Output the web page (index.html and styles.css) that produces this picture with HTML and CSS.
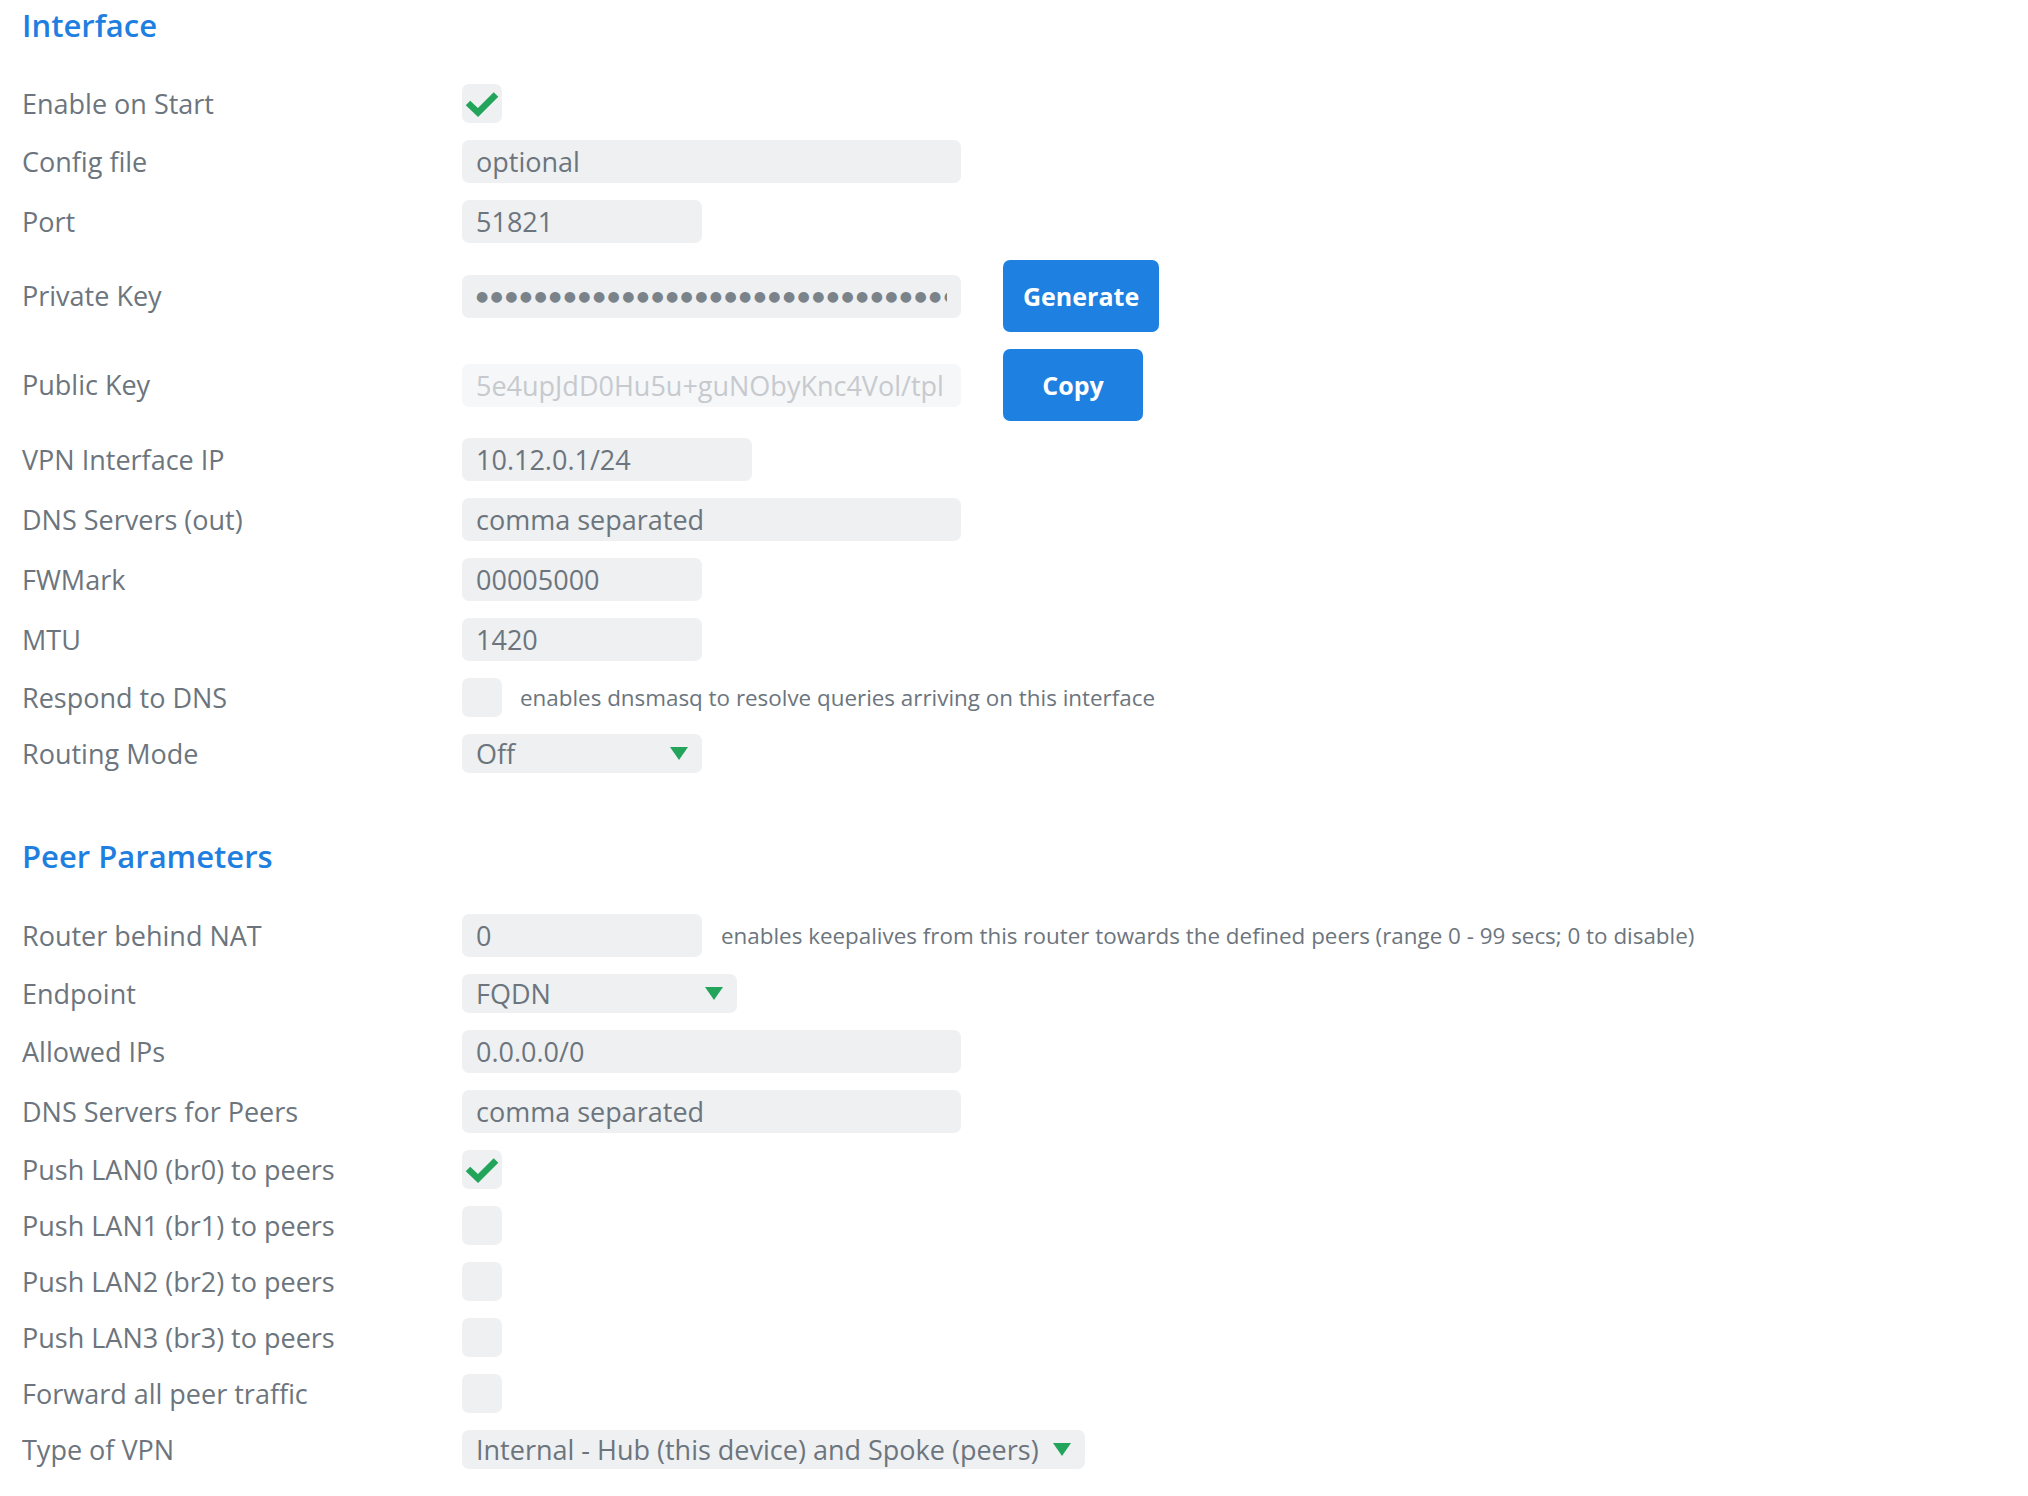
FILE: index.html
```html
<!DOCTYPE html>
<html lang="en">
<head>
<meta charset="utf-8">
<title>Interface</title>
<link rel="stylesheet" href="styles.css">
</head>
<body>
<main class="page">
  <section class="section">
    <h2 class="section-title">Interface</h2>
    <div class="form">
      <div class="row">
        <span class="label">Enable on Start</span>
        <div class="field">
          <span class="checkbox">
            <svg class="check" viewBox="0 0 40 39" width="40" height="39"><polyline points="6,19 16,28.5 34,10.5" /></svg>
          </span>
        </div>
      </div>
      <div class="row">
        <span class="label">Config file</span>
        <div class="field"><div class="input wide">optional</div></div>
      </div>
      <div class="row">
        <span class="label">Port</span>
        <div class="field"><div class="input short">51821</div></div>
      </div>
      <div class="row">
        <span class="label">Private Key</span>
        <div class="field">
          <div class="input wide"><span class="dots">&#9679;&#9679;&#9679;&#9679;&#9679;&#9679;&#9679;&#9679;&#9679;&#9679;&#9679;&#9679;&#9679;&#9679;&#9679;&#9679;&#9679;&#9679;&#9679;&#9679;&#9679;&#9679;&#9679;&#9679;&#9679;&#9679;&#9679;&#9679;&#9679;&#9679;&#9679;&#9679;&#9679;&#9679;&#9679;&#9679;&#9679;&#9679;</span></div>
          <button class="btn" type="button">Generate</button>
        </div>
      </div>
      <div class="row">
        <span class="label">Public Key</span>
        <div class="field">
          <div class="input wide disabled"><span class="clip">5e4upJdD0Hu5u+guNObyKnc4Vol/tpl</span></div>
          <button class="btn" type="button">Copy</button>
        </div>
      </div>
      <div class="row">
        <span class="label">VPN Interface IP</span>
        <div class="field"><div class="input mid">10.12.0.1/24</div></div>
      </div>
      <div class="row">
        <span class="label">DNS Servers (out)</span>
        <div class="field"><div class="input wide">comma separated</div></div>
      </div>
      <div class="row">
        <span class="label">FWMark</span>
        <div class="field"><div class="input short">00005000</div></div>
      </div>
      <div class="row">
        <span class="label">MTU</span>
        <div class="field"><div class="input short">1420</div></div>
      </div>
      <div class="row">
        <span class="label">Respond to DNS</span>
        <div class="field">
          <span class="checkbox"></span>
          <span class="hint">enables dnsmasq to resolve queries arriving on this interface</span>
        </div>
      </div>
      <div class="row">
        <span class="label">Routing Mode</span>
        <div class="field">
          <div class="input select short"><span>Off</span><svg class="caret" viewBox="0 0 18 13" width="18" height="13"><polygon points="0,0 18,0 9,13"/></svg></div>
        </div>
      </div>
    </div>
  </section>

  <section class="section">
    <h2 class="section-title">Peer Parameters</h2>
    <div class="form">
      <div class="row">
        <span class="label">Router behind NAT</span>
        <div class="field">
          <div class="input short">0</div>
          <span class="hint hint-nat">enables keepalives from this router towards the defined peers (range 0 - 99 secs; 0 to disable)</span>
        </div>
      </div>
      <div class="row">
        <span class="label">Endpoint</span>
        <div class="field">
          <div class="input select endpoint"><span>FQDN</span><svg class="caret" viewBox="0 0 18 13" width="18" height="13"><polygon points="0,0 18,0 9,13"/></svg></div>
        </div>
      </div>
      <div class="row">
        <span class="label">Allowed IPs</span>
        <div class="field"><div class="input wide">0.0.0.0/0</div></div>
      </div>
      <div class="row">
        <span class="label">DNS Servers for Peers</span>
        <div class="field"><div class="input wide">comma separated</div></div>
      </div>
      <div class="row">
        <span class="label">Push LAN0 (br0) to peers</span>
        <div class="field">
          <span class="checkbox">
            <svg class="check" viewBox="0 0 40 39" width="40" height="39"><polyline points="6,19 16,28.5 34,10.5" /></svg>
          </span>
        </div>
      </div>
      <div class="row">
        <span class="label">Push LAN1 (br1) to peers</span>
        <div class="field"><span class="checkbox"></span></div>
      </div>
      <div class="row">
        <span class="label">Push LAN2 (br2) to peers</span>
        <div class="field"><span class="checkbox"></span></div>
      </div>
      <div class="row">
        <span class="label">Push LAN3 (br3) to peers</span>
        <div class="field"><span class="checkbox"></span></div>
      </div>
      <div class="row">
        <span class="label">Forward all peer traffic</span>
        <div class="field"><span class="checkbox"></span></div>
      </div>
      <div class="row">
        <span class="label">Type of VPN</span>
        <div class="field">
          <div class="input select auto"><span>Internal - Hub (this device) and Spoke (peers)</span><svg class="caret" viewBox="0 0 18 13" width="18" height="13"><polygon points="0,0 18,0 9,13"/></svg></div>
        </div>
      </div>
    </div>
  </section>
</main>
</body>
</html>
```

FILE: styles.css
```css
html, body {
  margin: 0;
  padding: 0;
  background: #ffffff;
}

body {
  font-family: "Open Sans", "Noto Sans", "DejaVu Sans", sans-serif;
  color: #6c757d;
}

.page {
  padding: 5px 22px 0 22px;
}

.section-title {
  margin: 0;
  font-size: 31px;
  line-height: 40px;
  font-weight: 600;
  color: #1f7fe0;
}

.section + .section {
  margin-top: 63px;
}

.form {
  display: flex;
  flex-direction: column;
  gap: 17px;
  margin-top: 39px;
}

.section + .section .form {
  margin-top: 38px;
}

.row {
  display: grid;
  grid-template-columns: 440px 1fr;
  align-items: center;
}

.label {
  font-size: 27px;
  line-height: 36px;
  color: #6c757d;
  white-space: nowrap;
}

.field {
  display: flex;
  align-items: center;
  gap: 24px;
  min-width: 0;
}

.input {
  box-sizing: border-box;
  height: 43px;
  padding: 0 14px;
  background: #eef0f2;
  border-radius: 7px;
  font-size: 27px;
  line-height: 43px;
  color: #6c757d;
  white-space: nowrap;
  overflow: hidden;
  flex: none;
}

.input.wide { width: 499px; }
.input.short { width: 240px; }
.input.mid { width: 290px; }
.input.endpoint { width: 275px; }

.input.disabled {
  background: #f6f7f8;
  color: #c6cacf;
}

.clip {
  display: block;
  overflow: hidden;
  white-space: nowrap;
}

.dots {
  display: block;
  overflow: hidden;
  white-space: nowrap;
  font-family: "DejaVu Sans", sans-serif;
  font-size: 14px;
  letter-spacing: 2.4px;
  color: #7a828a;
}

.select {
  height: 39px;
  line-height: 39px;
  display: flex;
  align-items: center;
  gap: 14px;
}

.select.auto { padding-right: 14px; }

.select .caret {
  margin-left: auto;
  flex: none;
  fill: #22a55a;
}

.checkbox {
  box-sizing: border-box;
  width: 40px;
  height: 39px;
  border-radius: 7px;
  background: #eef0f2;
  flex: none;
  display: block;
}

.check {
  display: block;
}

.check polyline {
  fill: none;
  stroke: #22a55a;
  stroke-width: 6.5;
  stroke-linejoin: miter;
  stroke-linecap: butt;
}

.hint {
  font-size: 22.4px;
  line-height: 30px;
  color: #6c757d;
  white-space: nowrap;
  margin-left: -6px;
}

.hint-nat {
  margin-left: -5px;
}

.btn {
  box-sizing: border-box;
  height: 72px;
  min-width: 140px;
  padding: 0 20px;
  margin-left: 18px;
  border: none;
  border-radius: 7px;
  background: #1e80e0;
  color: #ffffff;
  font-family: "Open Sans", "Noto Sans", sans-serif;
  font-size: 25px;
  font-weight: 700;
  cursor: pointer;
}
```
